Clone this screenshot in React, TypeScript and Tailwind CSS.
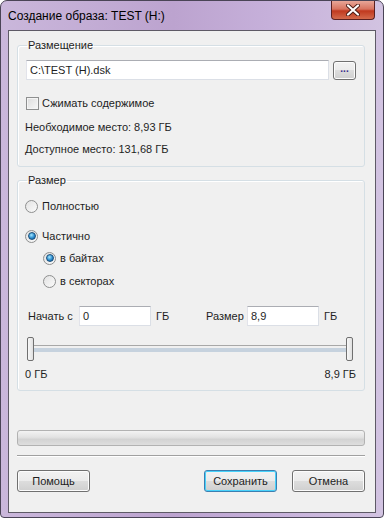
import React, { useState } from "react";

const font = { fontFamily: '"Liberation Sans", Arial, sans-serif' };

const Radio = ({ checked, label, onClick }: { checked: boolean; label: string; onClick: () => void }) => (
  <button onClick={onClick} className="flex items-center h-[16px] gap-[4px] text-left">
    <span className="w-[13px] h-[13px] rounded-full border border-[#8e8f8f] bg-gradient-to-br from-[#e2e2e2] to-[#fbfbfb] flex items-center justify-center">
      {checked && (
        <span className="w-[8px] h-[8px] rounded-full border border-[#1c4f7a] bg-[radial-gradient(circle_at_40%_35%,#a6e8ff_0%,#2a8ccf_55%,#0b4f8a_100%)]" />
      )}
    </span>
    <span>{label}</span>
  </button>
);

const WinButton = ({ label, isDefault }: { label: string; isDefault?: boolean }) => (
  <button
    className={`w-[73px] h-[22px] rounded-[3px] border ${
      isDefault
        ? "border-[#3c7fb1] shadow-[inset_0_0_0_1px_#48d2fb]"
        : "border-[#707070] shadow-[inset_0_0_0_1px_#fcfcfc]"
    } bg-[linear-gradient(#f2f2f2_0%,#ebebeb_50%,#dddddd_50%,#cfcfcf_100%)] text-[#1e1e1e] leading-none`}
  >
    {label}
  </button>
);

const TextBox = ({ value, w }: { value: string; w?: string }) => (
  <div
    className={`${w ?? "flex-1"} h-[20px] bg-white border border-[#dbdfe6] border-t-[#abadb3] border-l-[#e2e3ea] flex items-center px-[3px]`}
  >
    {value}
  </div>
);

export default function App() {
  const [mode, setMode] = useState("part");
  const [unit, setUnit] = useState("bytes");
  const [compress, setCompress] = useState(false);

  return (
    <div
      style={font}
      className="w-[384px] h-[518px] text-[11px] text-[#1e1e1e] rounded-t-[7px] rounded-b-[4px] border border-[#4a4456] bg-[linear-gradient(90deg,#cab7db_0%,#bca3cf_45%,#c6b0da_70%,#d2c3e1_100%)] flex flex-col px-[7px] pb-[4px]"
    >
      {/* Title bar */}
      <div className="h-[29px] flex items-start justify-between shrink-0">
        <span className="mt-[7px] text-[12px] leading-[16px] text-black">Создание образа: TEST (H:)</span>
        <button className="w-[44px] h-[19px] mr-[1px] rounded-b-[4px] border border-t-0 border-[#5a2020] bg-[linear-gradient(#e8a698_0%,#d8735f_45%,#c0391f_55%,#d46a4c_100%)] flex items-center justify-center">
          <svg width="14" height="12" viewBox="0 0 14 12">
            <path d="M2 1.5 L12 10.5 M12 1.5 L2 10.5" stroke="#4a1a14" strokeWidth="4" strokeLinecap="round" />
            <path d="M2 1.5 L12 10.5 M12 1.5 L2 10.5" stroke="#ffffff" strokeWidth="2.2" strokeLinecap="round" />
          </svg>
        </button>
      </div>

      {/* Client area */}
      <div className="flex-1 bg-[#f0f0f0] border border-[#5e5a66] px-[8px] pt-[6px] flex flex-col">
        {/* Placement */}
        <fieldset className="w-[348px] border border-[#d5dfe5] rounded-[3px] shadow-[inset_1px_1px_0_#ffffff] px-[8px] pb-[9px]">
          <legend className="ml-[1px] px-[1px] leading-[16px]">Размещение</legend>
          <div className="mt-[7px] flex items-center gap-[4px]">
            <TextBox value="C:\TEST (H).dsk" />
            <button className="w-[23px] h-[19px] rounded-[3px] border border-[#707070] shadow-[inset_0_0_0_1px_#fcfcfc] bg-[linear-gradient(#f2f2f2_0%,#ebebeb_50%,#dddddd_50%,#cfcfcf_100%)] text-[10px] font-bold text-[#3a2a8a] leading-none pb-[2px]">
              ...
            </button>
          </div>
          <button onClick={() => setCompress(!compress)} className="mt-[15px] flex items-center h-[16px] gap-[3px]">
            <span className="w-[13px] h-[13px] border border-[#8e8f8f] bg-gradient-to-br from-[#dcdcdc] to-[#f7f7f7] shadow-[inset_0_0_0_1px_#f4f4f4] flex items-center justify-center text-[10px] leading-none">
              {compress ? "✓" : ""}
            </span>
            <span>Сжимать содержимое</span>
          </button>
          <div className="mt-[8px] leading-[16px] -ml-[1px]">Необходимое место: 8,93 ГБ</div>
          <div className="mt-[6px] leading-[16px] -ml-[1px]">Доступное место: 131,68 ГБ</div>
        </fieldset>

        {/* Size */}
        <fieldset className="mt-[5px] w-[348px] border border-[#d5dfe5] rounded-[3px] shadow-[inset_1px_1px_0_#ffffff] px-[7px] pb-[8px]">
          <legend className="ml-[2px] px-[1px] leading-[16px]">Размер</legend>
          <div className="mt-[10px]">
            <Radio checked={mode === "full"} label="Полностью" onClick={() => setMode("full")} />
          </div>
          <div className="mt-[14px]">
            <Radio checked={mode === "part"} label="Частично" onClick={() => setMode("part")} />
          </div>
          <div className="mt-[6px] pl-[18px]">
            <Radio checked={unit === "bytes"} label="в байтах" onClick={() => setUnit("bytes")} />
          </div>
          <div className="mt-[7px] pl-[18px]">
            <Radio checked={unit === "sectors"} label="в секторах" onClick={() => setUnit("sectors")} />
          </div>

          <div className="mt-[17px] flex items-center pl-[3px]">
            <span className="w-[51px]">Начать с</span>
            <TextBox value="0" w="w-[72px]" />
            <span className="ml-[5px] w-[50px]">ГБ</span>
            <span className="w-[41px]">Размер</span>
            <TextBox value="8,9" w="w-[72px]" />
            <span className="ml-[5px]">ГБ</span>
          </div>

          {/* Slider */}
          <div className="mt-[11px] flex items-center pl-[2px] pr-[4px] h-[24px]">
            <div className="w-[7px] h-[24px] rounded-[2px] border border-[#707070] bg-[linear-gradient(90deg,#f8f8f8,#e0e0e0)]" />
            <div className="flex-1 h-[8px] border-t border-[#a8a8a8] bg-[#f0f0f0] flex flex-col">
              <div className="mt-[2px] h-[4px] bg-[#c6d2de]" />
            </div>
            <div className="w-[7px] h-[24px] rounded-[2px] border border-[#707070] bg-[linear-gradient(90deg,#f8f8f8,#e0e0e0)]" />
          </div>
          <div className="mt-[5px] flex justify-between leading-[16px] pr-[1px]">
            <span>0 ГБ</span>
            <span>8,9 ГБ</span>
          </div>
        </fieldset>

        {/* Progress */}
        <div className="mt-[39px] w-[348px] h-[16px] rounded-[3px] border border-[#b2b2b2] bg-[linear-gradient(#f3f3f3_0%,#e2e2e2_45%,#d3d3d3_60%,#dedede_100%)]" />
        <div className="mt-[9px] w-[348px] h-[2px] border-t border-[#a0a0a0] border-b border-b-[#ffffff]" />

        <div className="mt-[13px] w-[348px] flex items-center">
          <WinButton label="Помощь" />
          <div className="flex-1" />
          <WinButton label="Сохранить" isDefault />
          <div className="w-[15px]" />
          <WinButton label="Отмена" />
        </div>
      </div>
    </div>
  );
}
